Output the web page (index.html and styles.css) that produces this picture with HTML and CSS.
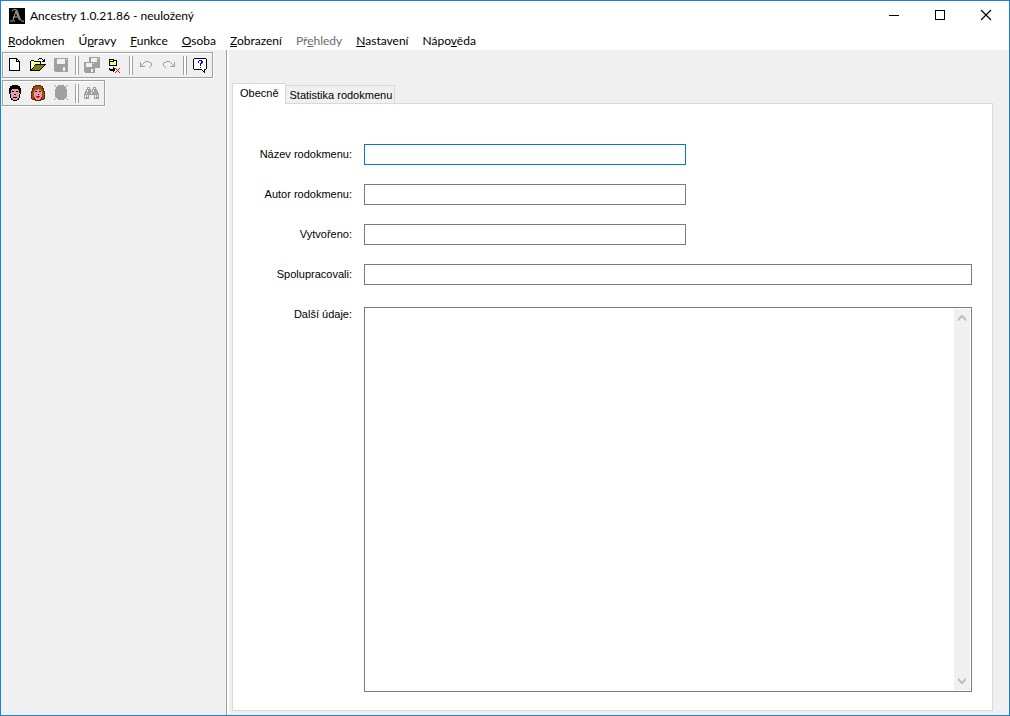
FILE: index.html
```html
<!DOCTYPE html>
<html lang="cs">
<head>
<meta charset="utf-8">
<title>Ancestry 1.0.21.86 - neuložený</title>
<link rel="stylesheet" href="styles.css">
</head>
<body>
<div class="window">
  <header class="titlebar">
    <svg class="app-icon" viewBox="0 0 16 16" aria-hidden="true">
      <rect width="16" height="16" fill="#000"/>
      <path d="M3 3L5 1.500L8 2L11 11L13 13.500L15 13M7 3L4 12M1 13H6M4 9H9" fill="none" stroke="#aaa"/>
      <path d="M7 3L11 12" stroke="#888" stroke-width="2"/>
    </svg>
    <h1 class="title">Ancestry 1.0.21.86 - neuložený</h1>
    <button class="caption-button" aria-label="Minimalizovat"><svg viewBox="0 0 12 12"><path d="M1 5h10v1H1z"/></svg></button>
    <button class="caption-button" aria-label="Maximalizovat"><svg viewBox="0 0 12 12"><path d="M1 0h10v10H1zM2 1v8h8V1z" fill-rule="evenodd"/></svg></button>
    <button class="caption-button" aria-label="Zavřít"><svg class="smooth" viewBox="0 0 12 12"><path d="M1 0L11 10M11 0L1 10" fill="none" stroke="#000" stroke-width="1.200"/></svg></button>
  </header>
  <nav class="menubar">
    <button><u>R</u>odokmen</button>
    <button>Ú<u>p</u>ravy</button>
    <button><u>F</u>unkce</button>
    <button><u>O</u>soba</button>
    <button><u>Z</u>obrazení</button>
    <button disabled>Př<u>e</u>hledy</button>
    <button><u>N</u>astavení</button>
    <button>Nápo<u>v</u>ěda</button>
  </nav>
  <div class="workspace">
    <aside class="sidebar">
      <div class="toolbar">
        <button aria-label="Nový"><svg viewBox="0 0 16 16"><path d="M3 1h8v1h1v1h1v1h1v10H3z"/><path d="M4 2h6v3h3v8H4z" fill="#fff"/><path d="M11 3h1v1h-1z" fill="#fff"/></svg></button>
        <button aria-label="Otevřít"><svg viewBox="0 0 16 16">
          <path d="M10 1h3v1h-3zM9 2h1v1H9zM13 2h1v1h-1zM15 2h1v3h-3V4h1V3h1zM2 3h3v1H2zM1 4h1v9H1zM5 4h7v1H5zM11 5h1v2h-1zM6 7h11v1h-1v1h-1v1h-1v1h-1v1h-1v1h-1v1H1v-1h1v-1h1v-1h1v-1h1V8h1z"/>
          <path d="M2 4h3v1h6v2H5v1H4v1H3v2H2z" fill="#ff6"/>
          <path d="M2 5h1v1H2zM4 5h1v1H4zM6 5h1v1H6zM8 5h1v1H8zM10 5h1v1h-1zM3 6h1v1H3zM2 7h1v1H2zM3 8h1v1H3z" fill="#fff"/>
          <path d="M6 8h9v1h-1v1h-1v1h-1v1h-1v1H3v-1h1v-1h1V9h1z" fill="#808000"/></svg></button>
        <button aria-label="Uložit" disabled><svg viewBox="0 0 16 16"><path d="M2 1h14v14H3v-1H2z" fill="#a0a0a0"/><path d="M5 2h8v5H5zM14 2h1v1h-1zM11 10h2v4h-2z" fill="#f0f0f0"/></svg></button>
        <span class="separator"></span>
        <button aria-label="Uložit vše" disabled><svg viewBox="0 0 16 16"><path d="M6 0h11v11H7V10H6z" fill="#a0a0a0"/><path d="M8 1h6v4H8zM15 1h1v1h-1z" fill="#f0f0f0"/><path d="M1 5h11v11H2v-1H1z" fill="#a0a0a0"/><path d="M3 6h6v4H3zM10 6h1v1h-1zM8 12h2v3H8z" fill="#f0f0f0"/></svg></button>
        <button aria-label="Přesunout"><svg viewBox="0 0 16 16"><path d="M3 2h5v1h3v6H3z"/><path d="M4 3h3v1H4zM4 5h6v3H4z" fill="#ff6"/><path d="M8 4h2v1H8z" fill="#fff"/><path d="M3 11h1v1h3v-2h1v1h1v3H8v1H7v-1H4v-1H3z"/><path d="M9 11h1v1h1v1h1v-1h1v-1h1v1h-1v1h-1v1h1v1h1v1h-1v-1h-1v-1h-1v1h-1v1H9v-1h1v-1h1v-1h-1v-1H9z" fill="#f00"/></svg></button>
        <span class="separator"></span>
        <button aria-label="Zpět" disabled><svg viewBox="0 0 16 16"><path d="M3 5h1v3h1V7h1v1H5v1h3v1H3zM6 6h1v1H6zM7 5h1v1H7zM8 4h4v1H8zM12 5h2v1h-2zM14 6h1v3h-1zM13 9h1v1h-1zM12 10h1v1h-1z" fill="#a0a0a0"/></svg></button>
        <button aria-label="Znovu" disabled><svg viewBox="0 0 16 16"><path d="M15 5h-1v3h-1V7h-1v1h1v1h-3v1h5zM11 6h1v1h-1zM10 5h1v1h-1zM6 4h4v1H6zM4 5h2v1H4zM3 6h1v3H3zM4 9h1v1H4zM5 10h1v1H5z" fill="#a0a0a0"/></svg></button>
        <span class="separator"></span>
        <button aria-label="Nápověda"><svg viewBox="0 0 16 16"><path d="M3 1h12v1h1v10h-1v1h-1v3h-1v-1h-1v-1h-1v-1H3v-1H2V2h1z"/><path d="M3 2h12v10h-2v2h-1v-1h-1v-1H3z" fill="#fff"/><path d="M8 3h3v1H8zM7 4h1v2H7zM10 4h2v2h-2zM9 6h2v1H9zM9 7h1v2H9zM9 10h1v1H9z" fill="#00f"/></svg></button>
      </div>
      <div class="toolbar">
        <button aria-label="Muž"><svg viewBox="0 0 16 16"><path d="M6 0h6v1h2v2h1v6h-1v4h-1v2h-2v1H7v-1H5v-2H4V9H3V3h1V1h2z"/><path d="M6 4h6v1h1v3h1v1h-1v4h-1v1h-1v1H7v-1H6v-1H5V9H4V8h1V5h1z" fill="#e898a8"/><path d="M6 6h2v1H6zM10 6h2v1h-2zM9 9H8v1h2V9zM7 12h4v1H7z"/></svg></button>
        <button aria-label="Žena"><svg viewBox="0 0 16 16"><path d="M6 0h6v1h2v2h1v3h1v8h-1v1h-3v1H6v-1H3v-1H2V6h1V3h1V1h2z" fill="#5a2800"/><path d="M6 1h6v1h1v2h1v3h1v7h-2v-2h-1V5H6v7H5v2H3V7h1V4h1V2h1z" fill="#a04c10"/><path d="M6 5h3V4h1v1h2v1h1v6h-1v2h-1v1H7v-1H6v-2H5V6h1z" fill="#e898a8"/><path d="M6 6h2v1H6zM10 6h2v1h-2zM9 9h1v1H9z"/><path d="M7 11h4v1h-1v1H8v-1H7z" fill="#f00020"/></svg></button>
        <button aria-label="Odstranit osobu" disabled><svg viewBox="0 0 16 16"><path d="M6 0h6v1h1v1h1V1h1V0h1v1h-1v1h-1v2h1v8h-1v1h1v1h1v1h-1v-1h-1v-1h-1v1h-1v1H6v-1H5v-1H4v1H3v1H2v-1h1v-1h1v-1H3V4h1V2H3V1H2V0h1v1h1v1h1V1h1z" fill="#a0a0a0"/></svg></button>
        <span class="separator"></span>
        <button aria-label="Hledat" disabled><svg viewBox="0 0 16 16"><path d="M4 2h3v2h1v2h1V4h1V2h3v2h1v2h1v2h1v6h-5v-4H6v4H1V8h1V6h1V4h1z" fill="#a0a0a0"/><path d="M5 3h1v1H5zM11 3h1v1h-1zM4 5h1v2H4zM10 5h1v2h-1zM8 7h1v2H8zM3 8h1v1H3zM2 10h1v3H2zM4 10h1v2H4zM12 10h1v3h-1zM14 10h1v2h-1z" fill="#f0f0f0"/></svg></button>
      </div>
    </aside>
    <main class="content">
      <div class="tabs" role="tablist">
        <button class="tab active" role="tab" aria-selected="true">Obecně</button>
        <button class="tab" role="tab" aria-selected="false">Statistika rodokmenu</button>
      </div>
      <form class="panel">
        <label for="name">Název rodokmenu:</label>
        <input id="name" class="short focused" type="text">
        <label for="author">Autor rodokmenu:</label>
        <input id="author" class="short" type="text">
        <label for="created">Vytvořeno:</label>
        <input id="created" class="short" type="text">
        <label for="coop">Spolupracovali:</label>
        <input id="coop" type="text">
        <label class="notes-label" for="notes">Další údaje:</label>
        <div class="memo">
          <textarea id="notes"></textarea>
          <div class="scrollbar" aria-hidden="true">
            <svg viewBox="0 0 8 6"><path d="M3 0h2v1h1v1h1v1h1v3H7V5H6V4H5V3H3v1H2v1H1v1H0V3h1V2h1V1h1z"/></svg>
            <svg viewBox="0 0 8 6"><path d="M3 6h2V5h1V4h1V3h1V0H7v1H6v1H5v1H3V2H2V1H1V0H0v3h1v1h1v1h1z"/></svg>
          </div>
        </div>
      </form>
    </main>
  </div>
</div>
</body>
</html>
```
FILE: styles.css
```css
* { box-sizing: border-box; }

body {
  margin: 0;
  background: #f0f0f0;
  color: #000;
  font: 11px/14px "Liberation Sans", Arial, sans-serif;
}

button {
  margin: 0;
  padding: 0;
  border: 0;
  background: none;
  color: inherit;
  font: inherit;
}

svg {
  display: block;
  overflow: visible;
  shape-rendering: crispEdges;
}

.window {
  display: flex;
  flex-direction: column;
  height: 100vh;
  border: 1px solid #1883d7;
}

.titlebar {
  display: flex;
  align-items: center;
  height: 30px;
  padding-left: 8px;
  background: #fff;
}

.app-icon {
  width: 16px;
  height: 16px;
  margin-right: 5px;
  shape-rendering: auto;
}

.title {
  flex: 1;
  margin: 0;
  font: 12px/16px Lato, "Open Sans", sans-serif;
}

.caption-button {
  display: grid;
  place-items: center;
  width: 46px;
  height: 30px;
}

.caption-button svg {
  width: 12px;
  height: 12px;
}

.caption-button .smooth { shape-rendering: auto; }

.menubar {
  display: flex;
  height: 19px;
  background: #fff;
  font: 12px/19px Lato, "Open Sans", sans-serif;
}

.menubar button { padding: 0 7px; }
.menubar button:disabled { color: #6d6d6d; }
.menubar u { text-underline-offset: 1px; }

.workspace {
  display: flex;
  flex: 1;
  min-height: 0;
}

.sidebar {
  display: flex;
  flex-direction: column;
  align-items: flex-start;
  gap: 2px;
  width: 226px;
  padding: 2px 0 0 1px;
  border-right: 1px solid #a0a0a0;
}

.toolbar {
  display: flex;
  height: 26px;
  padding-right: 1px;
  border: 1px solid #a0a0a0;
  box-shadow: 1px 1px #fff, inset 1px 1px #fff;
}

.toolbar button {
  width: 23px;
  padding: 0 4px 0 3px;
}

.toolbar svg {
  width: 16px;
  height: 16px;
}

.separator {
  width: 4px;
  margin: 3px 1px 2px 3px;
  border: solid #a0a0a0;
  border-width: 0 1px;
  background: #fff;
}

.content {
  display: flex;
  flex: 1;
  flex-direction: column;
  padding: 33px 16px 4px 3px;
  border-left: 2px solid #fff;
}

.tabs {
  display: flex;
  align-items: flex-end;
}

.tab {
  height: 18px;
  padding: 0 2px 0 4px;
  border: 1px solid #d9d9d9;
  border-width: 1px 1px 0 0;
}

.tab.active {
  z-index: 1;
  height: 21px;
  margin-bottom: -1px;
  padding: 0 6px 2px 7px;
  border-left-width: 1px;
  background: #fff;
}

.panel {
  display: grid;
  flex: 1;
  grid-template-columns: 119px 1fr;
  grid-template-rows: 21px 21px 21px 24px 1fr;
  gap: 19px 12px;
  padding: 40px 20px 18px 0;
  border: 1px solid #d9d9d9;
  background: #fff;
}

.panel label {
  padding-top: 3px;
  text-align: right;
}

.panel .notes-label { padding-top: 0; }

.panel input,
.memo {
  width: 100%;
  height: 21px;
  border: 1px solid #7a7a7a;
  background: #fff;
}

.panel input {
  padding: 1px 4px;
  font: inherit;
  outline: 0;
}

.panel .short { width: 53%; }
.panel .focused { border-color: #0078d7; }

.panel .memo {
  display: flex;
  height: 100%;
  padding: 1px;
}

.memo textarea {
  flex: 1;
  padding: 2px;
  border: 0;
  font: inherit;
  resize: none;
  outline: 0;
}

.scrollbar {
  display: flex;
  flex-direction: column;
  align-items: center;
  justify-content: space-between;
  width: 16px;
  padding: 6px 0;
  background: #f0f0f0;
}

.scrollbar svg {
  width: 8px;
  height: 6px;
  fill: #bfbfbf;
}
```
